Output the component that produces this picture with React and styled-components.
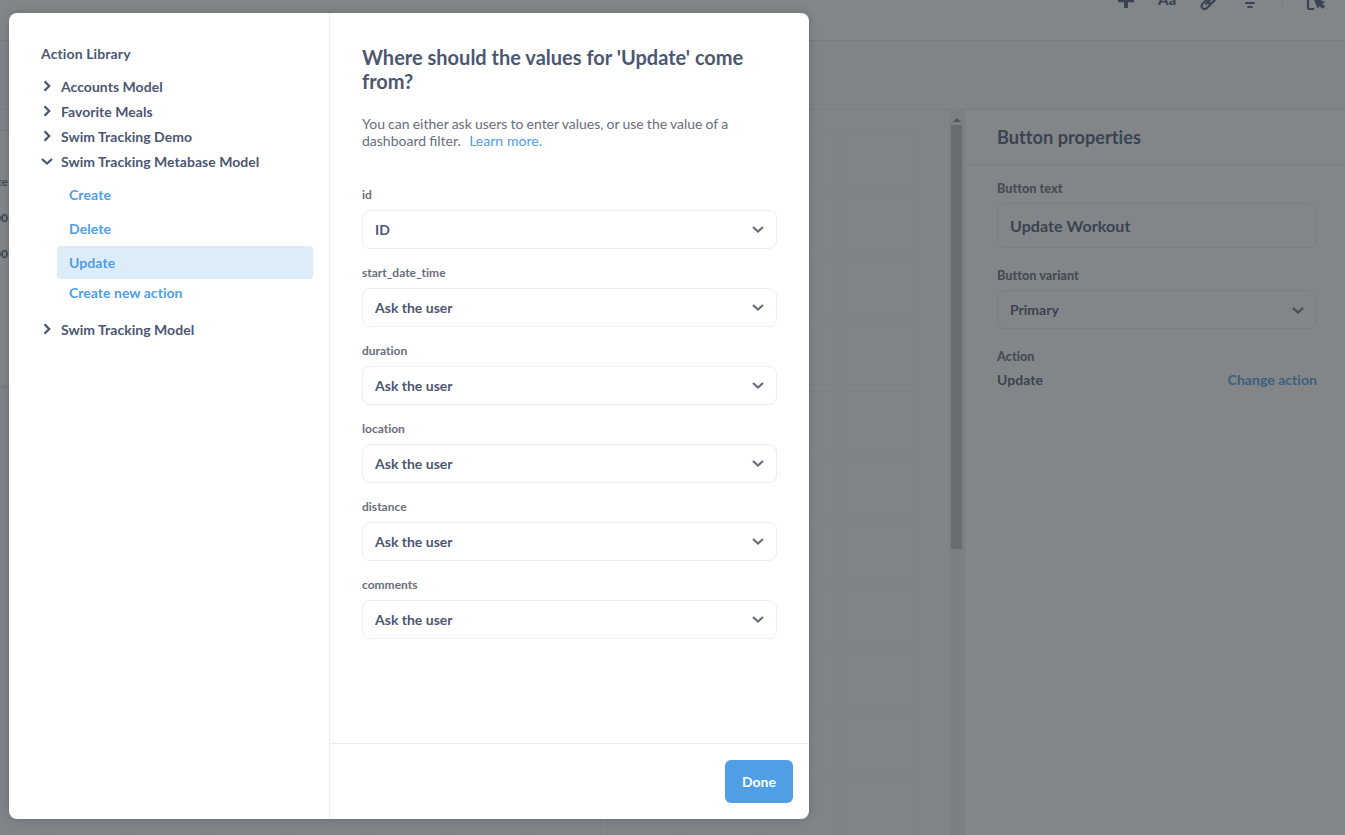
import React from "react";
import styled, { createGlobalStyle } from "styled-components";

const brand = "#509ee3";
const dark = "#4c5773";
const medium = "#696e7b";
const line = "#eeecec";

const Global = createGlobalStyle`
  * { box-sizing: border-box; }
  body {
    margin: 0;
    overflow: hidden;
    font-family: Lato, sans-serif;
    font-variant-ligatures: none;
    color: ${dark};
  }
  h2, h3, p { margin: 0; }
  button { font: inherit; border: 0; cursor: pointer; }
`;

const Page = styled.div`
  position: relative;
  display: flex;
  flex-direction: column;
  width: 1345px;
  height: 835px;
  overflow: hidden;
  background: #fff;
`;

const Toolbar = styled.header`
  display: flex;
  justify-content: flex-end;
  height: 41px;
  flex: none;
  padding-right: 16px;
  border-bottom: 1px solid ${line};
`;

const SubHeader = styled.div`
  height: 69px;
  flex: none;
  background: #f9fafc;
  border-bottom: 1px solid ${line};
`;

const Body = styled.div`
  display: flex;
  flex: 1;
  min-height: 0;
`;

const Canvas = styled.main`
  position: relative;
  width: 949px;
  background: #f9fafc;
  overflow: hidden;
`;

const Grid = styled.div`
  display: grid;
  grid-template-columns: repeat(12, 73px);
  grid-auto-rows: 59px;
  gap: 6px;
  margin: 21px 0 0 -25px;
`;

const Cell = styled.div`
  border: 1px solid #f0f2f1;
`;

const TableCard = styled.div`
  position: absolute;
  left: -101px;
  top: 20px;
  width: 300px;
  height: 256px;
  padding-top: 33px;
  background: #fff;
  border: 1px solid ${line};
  box-shadow: 0 1px 3px rgba(0, 0, 0, 0.13);
`;

const TableRow = styled.div`
  width: 108px;
  height: 36px;
  padding-top: 9px;
  text-align: right;
  font-size: 12px;
  font-weight: 700;
  line-height: 17px;
  border-bottom: 1px solid #f3f4f5;
  color: ${(p) => (p.$head ? medium : dark)};
`;

const Scrollbar = styled.div`
  display: flex;
  flex-direction: column;
  align-items: center;
  width: 15px;
  background: #f1f1f1;
`;

const ArrowSlot = styled.div`
  height: 15px;
  padding-top: 6px;
  line-height: 0;
`;

const Thumb = styled.div`
  width: 11px;
  height: 424px;
  background: #c1c1c1;
`;

const Panel = styled.aside`
  flex: 1;
  border-left: 1px solid ${line};
  background: #fff;
`;

const PanelTitle = styled.h3`
  height: 55px;
  padding: 15px 32px 0;
  border-bottom: 1px solid ${line};
  font-size: 18.2px;
  line-height: 24px;
  font-weight: 700;
`;

const PanelBody = styled.div`
  padding: 15px 28px 0 32px;
`;

const PanelLabel = styled.div`
  font-size: 12.7px;
  line-height: 17px;
  font-weight: 900;
  color: ${medium};
`;

const Input = styled.div`
  height: 45px;
  margin: 6px 0 19px;
  padding: 0 12px;
  border: 1px solid ${line};
  border-radius: 8px;
  font-size: 16px;
  line-height: 44px;
  font-weight: 700;
  letter-spacing: 0.08px;
`;

const Select = styled.div`
  display: flex;
  align-items: center;
  justify-content: space-between;
  height: 39px;
  margin-top: ${(p) => p.$before}px;
  margin-bottom: ${(p) => p.$after}px;
  padding: 0 12px;
  border: 1px solid ${line};
  border-radius: 8px;
  font-size: 14px;
  font-weight: 700;
`;

const FieldSelect = styled(Select)`
  svg { margin-bottom: 2px; }
`;

const ActionRow = styled.div`
  display: flex;
  justify-content: space-between;
  margin-top: 6px;
  font-size: 14px;
  line-height: 17px;
  font-weight: 700;
  letter-spacing: 0.04px;
`;

const Link = styled.span`
  color: ${brand};
`;

const Overlay = styled.div`
  position: absolute;
  inset: 0;
  padding: 13px 9px 16px;
  background: rgba(46, 53, 59, 0.6);
`;

const Modal = styled.section`
  display: flex;
  width: 800px;
  height: 806px;
  overflow: hidden;
  border-radius: 8px;
  background: #fff;
  box-shadow: 0 0 10px rgba(0, 0, 0, 0.18);
`;

const Sidebar = styled.nav`
  width: 321px;
  padding: 32px 16px 0 32px;
  border-right: 1px solid ${line};
  font-size: 14px;
  line-height: 17px;
  font-weight: 700;
  letter-spacing: 0.03px;
`;

const SidebarTitle = styled.div`
  margin-bottom: 12px;
  letter-spacing: 0.12px;
`;

const Model = styled.div`
  display: flex;
  align-items: center;
  height: 25px;
  gap: 8px;
`;

const IconSlot = styled.span`
  display: flex;
  width: 12px;
  transform: translateY(-1px);
`;

const Actions = styled.div`
  display: flex;
  flex-direction: column;
  margin: 4px 0 11px 16px;
`;

const Action = styled.div`
  height: 33px;
  margin-bottom: ${(p) => (p.$active ? 0 : 1)}px;
  padding: 8px 12px;
  border-radius: 4px;
  letter-spacing: 0.1px;
  color: ${brand};
  background: ${(p) => (p.$active ? "#ddecf9" : "transparent")};
`;

const NewAction = styled.div`
  padding: 5px 12px;
  color: ${brand};
`;

const Content = styled.div`
  display: flex;
  flex: 1;
  flex-direction: column;
`;

const Form = styled.div`
  flex: 1;
  padding: 32px 32px 0;
`;

const Title = styled.h2`
  font-size: 20px;
  line-height: 24px;
  font-weight: 700;
`;

const Description = styled.p`
  margin: 22px 0 38px;
  font-size: 14px;
  line-height: 17px;
  font-variant-ligatures: normal;
  word-spacing: -0.43px;
  color: ${medium};
`;

const LearnMore = styled(Link)`
  margin-left: 5.2px;
  word-spacing: 0.4px;
`;

const FieldLabel = styled.div`
  font-size: 12px;
  line-height: 16px;
  font-weight: 700;
  color: ${medium};
`;

const Footer = styled.footer`
  display: flex;
  justify-content: flex-end;
  height: 76px;
  padding: 16px;
  border-top: 1px solid ${line};
`;

const DoneButton = styled.button`
  width: 68px;
  height: 43px;
  padding: 0;
  border-radius: 6px;
  background: ${brand};
  color: #fff;
  font-size: 14px;
  font-weight: 700;
`;

const ToolIcons = styled.div`
  height: 12px;
  line-height: 0;
`;

function Chevron({ open = true, color = dark }) {
  return (
    <svg width="12" height="12" viewBox="0 0 12 12" fill="none" stroke={color} strokeWidth="2.3">
      <path d={open ? "M1 4l5 4.500L11 4" : "M3.500 1.200l4.700 4.800L3.500 10.800"} />
    </svg>
  );
}

function Tools() {
  return (
    <ToolIcons>
      <svg width="216" height="12" viewBox="1113 0 216 12" fill={dark}>
        <path d="M1118 0h16v2.200h-6V8h-4V2.200h-6z" />
        <text x="1158" y="5" fontSize="15" fontWeight="900" fontFamily="Lato">Aa</text>
        <g fill="none" stroke={dark} strokeWidth="2.200" strokeLinecap="round">
          <path d="M1207-.5l-4.300 4.300a2.800 2.800 0 0 0 4 4.500l3.800-3.800" />
          <path d="M1206 3.800l5-5M1208.500 2.600c1.500 1.500 3 .8 4.300-.5l2.600-2.600" />
          <path d="M1246 3h8M1248.200 7h3.600" />
          <path d="M1308 0v7.200q0 1.800 1.800 1.800h3.700" />
        </g>
        <path d="M1282 0h1v10h-1z" fill={line} />
        <path d="M1313-3l12.500 5-3.500 1.500 3.300 3-2.800 2.300-3-2.800-2 2.500z" />
      </svg>
    </ToolIcons>
  );
}

const fields = [
  ["id", "ID"],
  ["start_date_time", "Ask the user"],
  ["duration", "Ask the user"],
  ["location", "Ask the user"],
  ["distance", "Ask the user"],
  ["comments", "Ask the user"],
];

function ModelItem({ name, open = false }) {
  return (
    <Model>
      <IconSlot><Chevron open={open} /></IconSlot>
      {name}
    </Model>
  );
}

export default function App() {
  return (
    <Page>
      <Global />
      <Toolbar><Tools /></Toolbar>
      <SubHeader />
      <Body>
        <Canvas>
          <Grid>
            {Array.from({ length: 132 }, (_, i) => <Cell key={i} />)}
          </Grid>
          <TableCard>
            <TableRow $head>Date</TableRow>
            <TableRow>00</TableRow>
            <TableRow>00</TableRow>
          </TableCard>
        </Canvas>
        <Scrollbar>
          <ArrowSlot>
            <svg width="8" height="4" viewBox="0 0 8 4"><path d="M4 0l4 4H0z" fill="#858585" /></svg>
          </ArrowSlot>
          <Thumb />
        </Scrollbar>
        <Panel>
          <PanelTitle>Button properties</PanelTitle>
          <PanelBody>
            <PanelLabel>Button text</PanelLabel>
            <Input>Update Workout</Input>
            <PanelLabel>Button variant</PanelLabel>
            <Select $before={6} $after={19}>Primary<Chevron color={medium} /></Select>
            <PanelLabel>Action</PanelLabel>
            <ActionRow>Update<Link>Change action</Link></ActionRow>
          </PanelBody>
        </Panel>
      </Body>
      <Overlay>
        <Modal>
          <Sidebar>
            <SidebarTitle>Action Library</SidebarTitle>
            <ModelItem name="Accounts Model" />
            <ModelItem name="Favorite Meals" />
            <ModelItem name="Swim Tracking Demo" />
            <ModelItem name="Swim Tracking Metabase Model" open />
            <Actions>
              <Action>Create</Action>
              <Action>Delete</Action>
              <Action $active>Update</Action>
              <NewAction>Create new action</NewAction>
            </Actions>
            <ModelItem name="Swim Tracking Model" />
          </Sidebar>
          <Content>
            <Form>
              <Title>Where should the values for 'Update' come from?</Title>
              <Description>
                You can either ask users to enter values, or use the value of a dashboard filter.{" "}
                <LearnMore>Learn more.</LearnMore>
              </Description>
              {fields.map(([label, value]) => (
                <React.Fragment key={label}>
                  <FieldLabel>{label}</FieldLabel>
                  <FieldSelect $before={7} $after={16}>{value}<Chevron color={medium} /></FieldSelect>
                </React.Fragment>
              ))}
            </Form>
            <Footer><DoneButton>Done</DoneButton></Footer>
          </Content>
        </Modal>
      </Overlay>
    </Page>
  );
}
